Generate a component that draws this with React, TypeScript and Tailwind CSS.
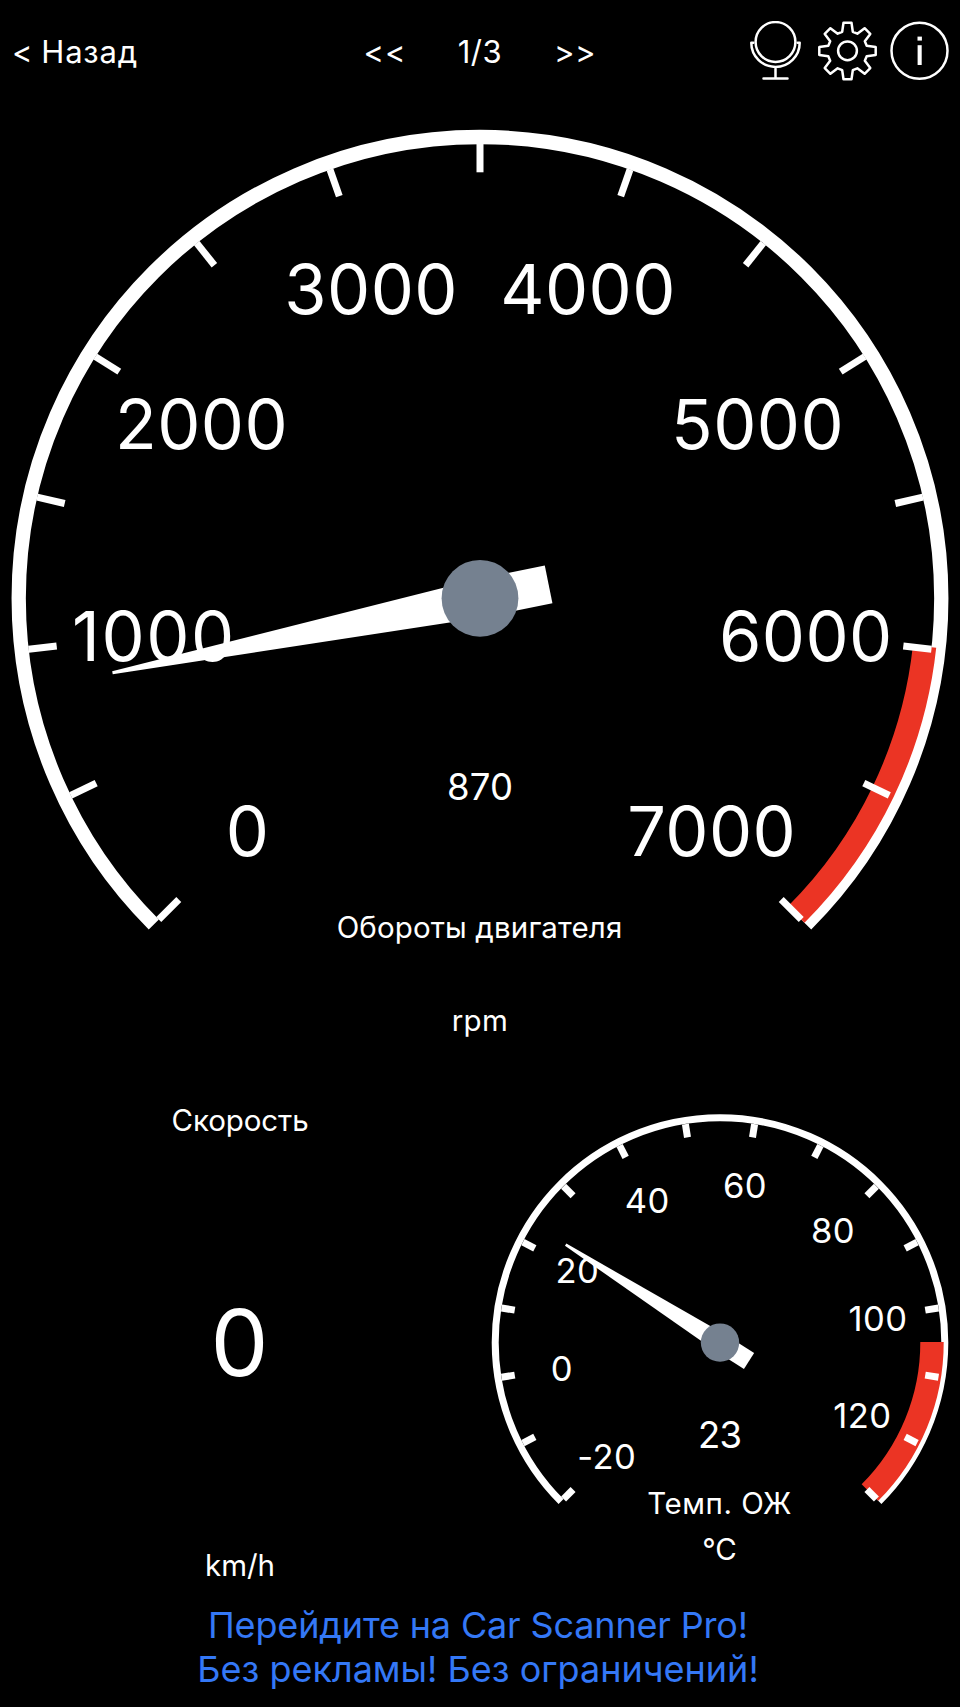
import type { ReactNode } from 'react';

type GaugeProps = {
  className: string;
  viewBox: string;
  cx: number;
  cy: number;
  /** Radius of the centre line of the outer ring. */
  radius: number;
  ring: number;
  tickOuter: number;
  tickInner: number;
  min: number;
  max: number;
  tickStep: number;
  labelStep: number;
  labelRadius: number;
  labelSize: number;
  labelSpacing: number;
  dangerFrom: number;
  dangerRadius: number;
  value: number;
  needle: { tip: number; tail: number; half: number; tipHalf: number; hub: number };
  valueOffset: number;
  valueSpacing: number;
};

const SWEEP = 270;

function Gauge(p: GaugeProps) {
  // Degrees clockwise from twelve o'clock.
  const angleOf = (v: number) => -SWEEP / 2 + ((v - p.min) / (p.max - p.min)) * SWEEP;
  const at = (deg: number, r: number) => {
    const a = (deg * Math.PI) / 180;
    return { x: p.cx + r * Math.sin(a), y: p.cy - r * Math.cos(a) };
  };
  const arc = (from: number, to: number, r: number) => {
    const a = at(from, r);
    const b = at(to, r);
    return `M${a.x} ${a.y}A${r} ${r} 0 ${to - from > 180 ? 1 : 0} 1 ${b.x} ${b.y}`;
  };
  const range = (step: number) => {
    const out: number[] = [];
    for (let v = p.min; v <= p.max; v += step) out.push(v);
    return out;
  };
  const { tip, tail, half, tipHalf, hub } = p.needle;

  return (
    <svg viewBox={p.viewBox} className={p.className}>
      <path d={arc(-135, 135, p.radius)} fill="none" stroke="#fff" strokeWidth={p.ring} />
      <path d={arc(angleOf(p.dangerFrom), 135, p.dangerRadius)} fill="none" stroke="#eb3424" strokeWidth={23.4} />
      {range(p.tickStep).map((v) => {
        const a = at(angleOf(v), p.tickOuter);
        const b = at(angleOf(v), p.tickInner);
        return <line key={v} x1={a.x} y1={a.y} x2={b.x} y2={b.y} stroke="#fff" strokeWidth={7} />;
      })}
      {range(p.labelStep).map((v) => {
        const c = at(angleOf(v), p.labelRadius);
        // The narrow leading "1" needs a little more room in four-digit labels.
        const spacing = v === 1000 ? p.labelSpacing + 1.2 : p.labelSpacing;
        return (
          <text
            key={v}
            x={c.x + spacing / 2 - p.labelSize * 0.009}
            y={c.y + p.labelSize * 0.3636 + 0.6}
            fontSize={p.labelSize}
            letterSpacing={spacing}
            textAnchor="middle"
            fill="#fff"
          >
            {v}
          </text>
        );
      })}
      <g transform={`translate(${p.cx} ${p.cy}) rotate(${angleOf(p.value)})`}>
        <path
          d={`M${-tipHalf} ${-tip}H${tipHalf}L${half} 0V${tail}H${-half}V0Z`}
          fill="#fff"
        />
      </g>
      <circle cx={p.cx} cy={p.cy} r={hub} fill="#758190" />
      <text
        x={p.cx + p.valueSpacing / 2}
        y={p.cy + p.valueOffset}
        fontSize={36.5}
        letterSpacing={p.valueSpacing}
        textAnchor="middle"
        fill="#fff"
      >
        {p.value}
      </text>
    </svg>
  );
}

function Icon({ children }: { children: ReactNode }) {
  return (
    <svg
      viewBox="-30.5 -30 60 60"
      className="h-[60px] w-[60px]"
      fill="none"
      stroke="#fff"
      strokeWidth={2.5}
      strokeLinecap="round"
      strokeLinejoin="round"
    >
      {children}
    </svg>
  );
}

const MirrorIcon = () => (
  <Icon>
    <circle cx={0} cy={-9} r={19.9} />
    <path d="M-22.2 -8.3H-24.2A24.2 24.2 0 0 0 24.2 -8.3H22.2M0 16.2V27.4M-12 27.6H12" />
  </Icon>
);

const GearIcon = () => {
  const points = Array.from({ length: 8 }, (_, i) => {
    const a = (i * Math.PI) / 4;
    return [
      [-5.3, -19.2],
      [-4, -28.2],
      [4, -28.2],
      [5.3, -19.2],
    ].map(([x, y]) => `${x * Math.cos(a) - y * Math.sin(a)},${x * Math.sin(a) + y * Math.cos(a)}`);
  }).flat();
  return (
    <Icon>
      <polygon points={points.join(' ')} />
      <circle cx={0} cy={-0.2} r={9.4} />
    </Icon>
  );
};

const InfoIcon = () => (
  <Icon>
    <circle cx={0} cy={-0.2} r={28} />
    <rect x={-2} y={-14.4} width={4.4} height={4} fill="#fff" stroke="none" />
    <rect x={-1.9} y={-5.8} width={4.1} height={19.8} fill="#fff" stroke="none" />
  </Icon>
);

export default function App() {
  return (
    <div className="flex h-[1707px] w-[960px] flex-col overflow-hidden bg-black font-['Inter',sans-serif] text-white">
      <header className="grid h-[102px] shrink-0 grid-cols-[1fr_auto_1fr] items-center pr-[11px] pl-3 text-[31px] leading-[38px]">
        <button className="justify-self-start pt-[2px] tracking-[0.8px] [word-spacing:-1.5px]">&lt; Назад</button>
        <nav className="grid grid-cols-3 pt-[2px] pr-px">
          <button className="w-[95px] text-center tracking-[1px]">&lt;&lt;</button>
          <span className="w-[95px] text-center tracking-[0.6px]">1/3</span>
          <button className="w-[95px] text-center tracking-[0.6px]">&gt;&gt;</button>
        </nav>
        <div className="flex gap-3 justify-self-end">
          <MirrorIcon />
          <GearIcon />
          <InfoIcon />
        </div>
      </header>

      <section className="flex h-[937px] shrink-0 flex-col items-center text-[29.5px] leading-9">
        <Gauge
          className="h-[807px] w-[960px] overflow-visible"
          viewBox="0 102 960 807"
          cx={480}
          cy={598.3}
          radius={461.3}
          ring={14.3}
          tickOuter={454.3}
          tickInner={426}
          min={0}
          max={7000}
          tickStep={500}
          labelStep={1000}
          labelRadius={328.3}
          labelSize={68.5}
          labelSpacing={0.4}
          dangerFrom={5994}
          dangerRadius={447.2}
          value={870}
          needle={{ tip: 375, tail: 70, half: 19.3, tipHalf: 1.5, hub: 38.4 }}
          valueOffset={201.2}
          valueSpacing={0.2}
        />
        <h2 className="pr-px tracking-[0.13px]">Обороты двигателя</h2>
        <p className="mt-[57px] tracking-[0.4px]">rpm</p>
      </section>

      <section className="mt-[63px] grid h-[481px] shrink-0 grid-cols-2 text-[29.5px] leading-9">
        <div className="flex flex-col items-center justify-between">
          <h2 className="tracking-[-0.1px]">Скорость</h2>
          <p className="pr-px text-[92px] leading-[110px]">0</p>
          <p>km/h</p>
        </div>
        <div className="flex flex-col items-center">
          <Gauge
            className="h-[383px] w-[480px] shrink-0 overflow-visible"
            viewBox="480 1102 480 383"
            cx={720}
            cy={1342.6}
            radius={224.8}
            ring={7}
            tickOuter={221.2}
            tickInner={207.8}
            min={-20}
            max={130}
            tickStep={10}
            labelStep={20}
            labelRadius={160}
            labelSize={34.6}
            labelSpacing={0.4}
            dangerFrom={104.9}
            dangerRadius={212}
            value={23}
            needle={{ tip: 182.8, tail: 34.4, half: 9.5, tipHalf: 1.3, hub: 19.2 }}
            valueOffset={105.8}
            valueSpacing={-0.6}
          />
          <h2 className="pr-px tracking-[0.55px]">Темп. ОЖ</h2>
          <p className="mt-[10px] pr-px">°C</p>
        </div>
      </section>

      <footer className="mt-5 flex shrink-0 flex-col items-center pr-1 text-[36px] leading-[44px] text-[#3478f6]">
        <p className="tracking-[-0.15px]">Перейдите на Car Scanner Pro!</p>
        <p>Без рекламы! Без ограничений!</p>
      </footer>
    </div>
  );
}
